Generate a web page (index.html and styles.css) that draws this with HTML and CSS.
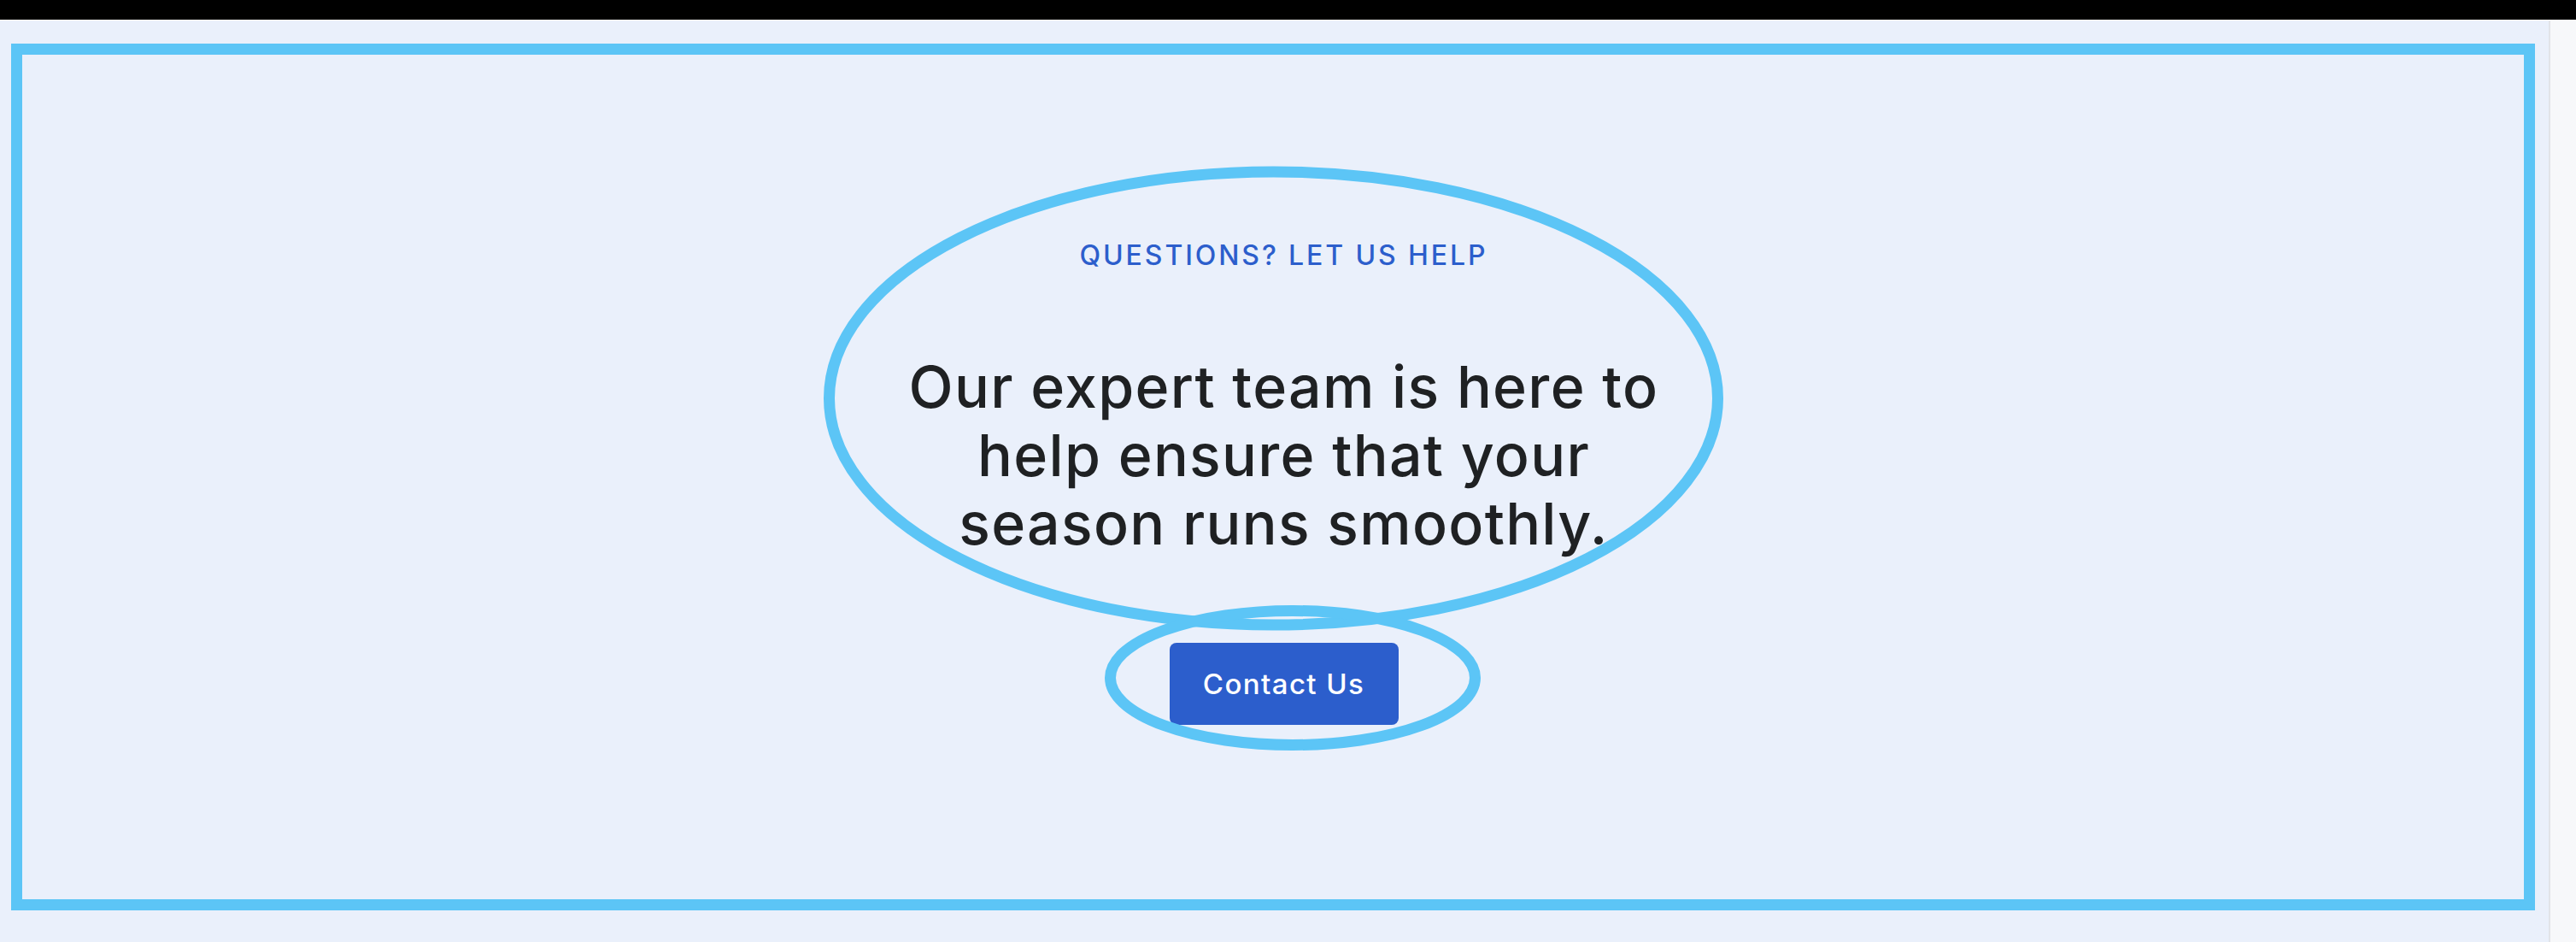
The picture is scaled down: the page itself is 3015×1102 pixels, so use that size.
FILE: index.html
```html
<!DOCTYPE html>
<html lang="en">
<head>
<meta charset="utf-8">
<title>Questions? Let us help</title>
<link rel="stylesheet" href="styles.css">
</head>
<body>
  <div class="topbar"></div>
  <div class="window">
    <main class="page">
      <section class="frame">
        <div class="content">
          <p class="eyebrow">QUESTIONS? LET US HELP</p>
          <h2 class="headline">Our expert team is here to<br>help ensure that your<br>season runs smoothly.</h2>
          <a class="btn" href="#">Contact Us</a>
        </div>
      </section>
    </main>
    <div class="scrollbar"></div>
  </div>
  <svg class="annotations" width="3015" height="1102" viewBox="0 0 3015 1102" aria-hidden="true">
    <ellipse cx="1490.5" cy="466" rx="520" ry="265" fill="none" stroke="#5cc5f6" stroke-width="13"/>
    <ellipse cx="1513" cy="793" rx="213.5" ry="78.5" fill="none" stroke="#5cc5f6" stroke-width="13"/>
  </svg>
</body>
</html>
```
FILE: styles.css
```css
html, body {
  margin: 0;
  padding: 0;
}
body {
  width: 3015px;
  height: 1102px;
  overflow: hidden;
  background: #eaf0fb;
  font-family: Inter, "Liberation Sans", sans-serif;
  position: relative;
}
.topbar {
  height: 23px;
  background: #000;
  border-bottom: 1px solid #fff;
}
.window {
  display: flex;
  height: 1078px;
}
.page {
  flex: 1;
  background: #eaf0fb;
  padding: 27px 16px 0 13px;
}
.frame {
  box-sizing: border-box;
  height: 1014px;
  border: 13px solid #5cc5f6;
}
.content {
  display: flex;
  flex-direction: column;
  align-items: center;
  padding: 215px 0 0 25px;
}
.eyebrow {
  margin: 0;
  font-size: 32px;
  line-height: 40px;
  font-weight: 500;
  letter-spacing: 2.9px;
  color: #2c5ecc;
}
.headline {
  margin: 93px 0 0;
  font-size: 68px;
  line-height: 80px;
  font-weight: 500;
  color: #1f2123;
  text-align: center;
  letter-spacing: 1.3px;
}
.btn {
  margin-top: 100px;
  box-sizing: border-box;
  width: 268px;
  height: 96px;
  display: flex;
  align-items: center;
  justify-content: center;
  background: #2c5ecc;
  color: #fff;
  border-radius: 8px;
  font-size: 33px;
  font-weight: 500;
  letter-spacing: 1.4px;
  text-decoration: none;
}
.scrollbar {
  width: 30px;
  background: #f7f8fa;
  border-left: 2px solid #e2e4e8;
}
.annotations {
  position: absolute;
  left: 0;
  top: 0;
  pointer-events: none;
}
```
